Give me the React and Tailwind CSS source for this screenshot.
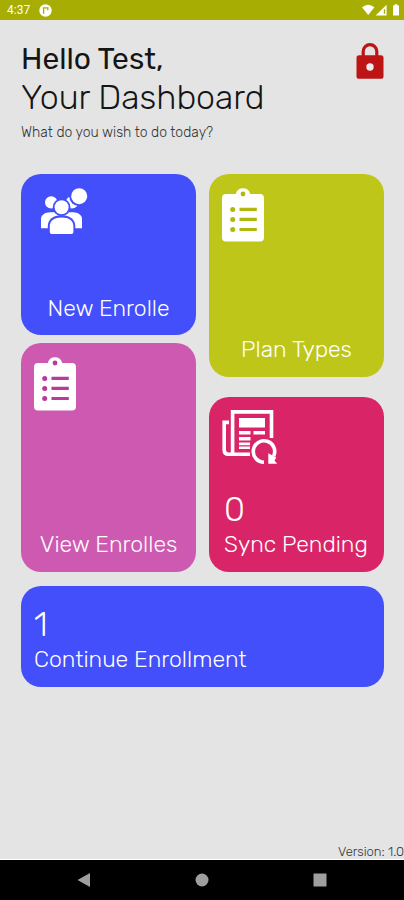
function StatusBar() {
  return (
    <header className="flex h-5 items-center justify-between bg-[#a8ad04] pr-1 pl-[7px] text-white">
      <div className="flex items-center gap-[9px]">
        <span className="font-['Roboto',sans-serif] text-[12px] leading-5">4:37</span>
        <svg className="size-[13px]" viewBox="0 0 13 13" aria-hidden="true">
          <circle cx="6.5" cy="6.5" r="6.2" fill="#fff" />
          <path d="M4.6 9.8V3.8H8.800V6.200" fill="none" stroke="#a8ad04" strokeWidth="1.3" />
        </svg>
      </div>
      <svg className="h-3 w-[38px]" viewBox="0 0 38 12" fill="#fff" aria-hidden="true">
        <path d="M0 3.2Q6.2-1.9 12.4 3.2L6.2 11z" />
        <path fillRule="evenodd" d="M24.6 .8V11.4H13.6zM23.2 5.2h-1.4v4.6h1.4z" />
        <path d="M31 1.6h1.6V.2h2.8v1.4H37v9.8h-6z" />
      </svg>
    </header>
  )
}

function LockIcon() {
  return (
    <svg className="h-9 w-7" viewBox="0 0 28 36" aria-hidden="true">
      <path d="M7.2 14V8.4a6.8 6.8 0 0 1 13.6 0V14" fill="none" stroke="#bd1515" strokeWidth="3.2" />
      <rect x=".5" y="12.2" width="27" height="23.6" rx="2.6" fill="#bd1515" />
      <circle cx="14" cy="24" r="3.7" fill="#ececec" />
    </svg>
  )
}

function PeopleIcon() {
  return (
    <svg className="h-[47px] w-12" viewBox="0 0 48 47" fill="#fff" aria-hidden="true">
      <circle cx="10.2" cy="14.4" r="6.2" />
      <circle cx="31" cy="14.4" r="6.2" />
      <path d="M0 40.3V31c0-4 4-6.8 9-6.8h23c5 0 9 2.800 9 6.800v9.300z" />
      <circle cx="38.2" cy="8.2" r="10" fill="#434ffa" />
      <circle cx="38.2" cy="8.2" r="8" />
      <circle cx="20.6" cy="19.2" r="8.8" fill="#434ffa" />
      <path d="M6.8 46V38c0-6 5-10.7 13.7-10.7S34.3 32 34.3 38v8z" fill="#434ffa" />
      <circle cx="20.6" cy="19.2" r="7" />
      <path d="M8.8 43.4V38c0-5.2 4.5-8.6 11.8-8.6s11.8 3.4 11.8 8.6v5.4a2.6 2.6 0 0 1-2.6 2.6H11.4a2.6 2.6 0 0 1-2.6-2.6z" />
    </svg>
  )
}

function ClipboardIcon({ ink }) {
  return (
    <svg className="h-[55px] w-[42px]" viewBox="0 0 42 55" fill="#fff" aria-hidden="true">
      <path d="M4 7h9.8a7.4 7.4 0 0 1 14.4 0H38a4 4 0 0 1 4 4v39.500a4 4 0 0 1-4 4H4a4 4 0 0 1-4-4V11a4 4 0 0 1 4-4z" />
      <g className={ink}>
        <circle cx="21" cy="7" r="2.4" />
        <circle cx="10.7" cy="22.4" r="2.5" />
        <circle cx="10.7" cy="32.4" r="2.5" />
        <circle cx="10.7" cy="42.5" r="2.5" />
        <path d="M17.5 20.8h17.3V24H17.5zM17.5 30.8h17.3V34H17.5zM17.5 40.9h17.3v3.2H17.5z" />
      </g>
    </svg>
  )
}

function SyncIcon() {
  return (
    <svg className="h-[55px] w-14" viewBox="0 0 56 55" aria-hidden="true">
      <g fill="none" stroke="#fff" strokeWidth="3.6">
        <path d="M10.6 44V1.9H49.5V28" />
        <path d="M7 12.4H2.2V40q0 4.2 4.2 4.2H28" />
      </g>
      <path
        d="M17 8h26v9.5H17zM17 21h11.5v3.6H17zM31.5 21H43v3.6H31.5zM17 27h11.5v3.4H17zM17 32.5h11v2.7H17zM17 36.5h11v2.6H17z"
        fill="#fff"
      />
      <circle cx="42" cy="41.5" r="14" fill="#d92567" />
      <path d="M42 52.2A10.7 10.7 0 1 1 51.6 46.2" fill="none" stroke="#fff" strokeWidth="3.6" />
      <path d="M46.300 43.300V53.800H55.200L52.500 50.500 54.300 47.500 50.500 45.500z" fill="#fff" />
    </svg>
  )
}

function Count({ value }) {
  return <span className="text-[34px] leading-9 font-light">{value}</span>
}

function Label({ children }) {
  return <span className="text-[23px] leading-8 font-light whitespace-nowrap">{children}</span>
}

export default function App() {
  return (
    <div className="flex min-h-screen flex-col bg-[#e4e4e4] font-['Rubik','Roboto',sans-serif] text-[#151515]">
      <StatusBar />

      <main className="flex flex-1 flex-col pr-5 pl-[21px]">
        <div className="flex items-start justify-between pt-[19px]">
          <div>
            <h1>
              <span className="block text-[30px] leading-10">Hello Test,</span>
              <span className="block text-[34px] leading-[38px] font-light">Your Dashboard</span>
            </h1>
            <p className="mt-1 text-[14px] leading-6 font-light text-[#333333]">What do you wish to do today?</p>
          </div>
          <button type="button" aria-label="Log out" className="mt-1">
            <LockIcon />
          </button>
        </div>

        {/* Tiles */}
        <div className="mt-[29px] grid grid-cols-2 gap-x-[13px] text-white">
          <div className="flex flex-col gap-2">
            <button type="button" className="flex h-[161px] flex-col justify-between rounded-[20px] bg-[#434ffa] px-5 pt-[14px] pb-[11px]">
              <PeopleIcon />
              <span className="self-center">
                <Label>New Enrolle</Label>
              </span>
            </button>
            <button type="button" className="flex h-[229px] flex-col justify-between rounded-[20px] bg-[#cd5ab0] px-[13px] pt-[13px] pb-3">
              <ClipboardIcon ink="fill-[#b93a98]" />
              <span className="self-center">
                <Label>View Enrolles</Label>
              </span>
            </button>
          </div>
          <div className="flex flex-col gap-5">
            <button type="button" className="flex h-[203px] flex-col justify-between rounded-[20px] bg-[#bec61a] px-[13px] pt-[13px] pb-3">
              <ClipboardIcon ink="fill-[#b0b80d]" />
              <span className="self-center">
                <Label>Plan Types</Label>
              </span>
            </button>
            <button type="button" className="flex h-[175px] flex-col items-start justify-between rounded-[20px] bg-[#d92567] px-[13px] pt-[13px] pb-3">
              <SyncIcon />
              <span className="flex flex-col items-start pl-0.5">
                <Count value={0} />
                <Label>Sync Pending</Label>
              </span>
            </button>
          </div>
        </div>

        <button type="button" className="mt-[14px] flex h-[101px] flex-col items-start justify-end rounded-[20px] bg-[#434ffa] px-[13px] pb-3 text-white">
          <Count value={1} />
          <Label>Continue Enrollment</Label>
        </button>
      </main>

      <p className="text-right text-[13px] leading-[14px] font-light text-[#333333]">Version: 1.0</p>

      <nav className="flex h-[41px] items-center justify-center gap-[104px] border-t border-white bg-black">
        <button type="button" aria-label="Back">
          <svg className="size-[14px]" viewBox="0 0 14 14" fill="#9e9e9e"><path d="M.5 7 13 0v14z" /></svg>
        </button>
        <button type="button" aria-label="Home">
          <svg className="size-[14px]" viewBox="0 0 14 14" fill="#9e9e9e"><circle cx="7" cy="7" r="6.5" /></svg>
        </button>
        <button type="button" aria-label="Recent apps">
          <svg className="size-[14px]" viewBox="0 0 14 14" fill="#9e9e9e"><path d="M.5.5h13v13H.5z" /></svg>
        </button>
      </nav>
    </div>
  )
}
